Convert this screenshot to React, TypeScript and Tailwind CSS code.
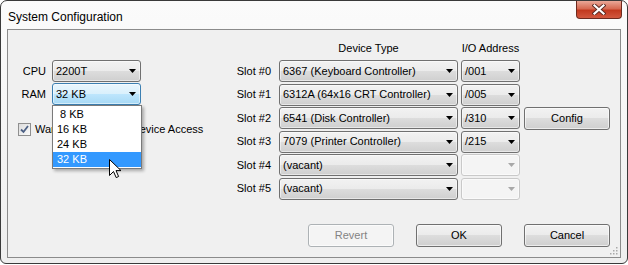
import React from "react"

type Kind = "normal" | "focus" | "disabled"

const Arrow = ({ disabled }: { disabled?: boolean }) => (
  <svg width="7" height="4" viewBox="0 0 7 4" className="shrink-0">
    <path d="M0 0H7L3.5 4Z" fill={disabled ? "#a8a8a8" : "#000"} />
  </svg>
)

const Combo = ({ text, kind = "normal", className = "" }: { text?: string; kind?: Kind; className?: string }) => {
  const skin =
    kind === "focus"
      ? "border-[#3c7fb1] bg-[linear-gradient(#eaf6fd_0%,#d9f0fc_50%,#bee6fd_50%,#a7d9f5_100%)]"
      : kind === "disabled"
        ? "border-[#c9c9c9] bg-[#f4f4f4]"
        : "border-[#707070] bg-[linear-gradient(#f2f2f2_0%,#ebebeb_50%,#dddddd_50%,#cfcfcf_100%)]"
  return (
    <div
      className={`flex items-center justify-between h-[22px] border rounded-[3px] pl-[3px] pr-[4px] shadow-[inset_0_0_0_1px_rgba(255,255,255,0.5)] ${skin} ${className}`}
    >
      <span className="whitespace-nowrap">{text}</span>
      <Arrow disabled={kind === "disabled"} />
    </div>
  )
}

const Button = ({ label, disabled, className = "" }: { label: string; disabled?: boolean; className?: string }) => (
  <div
    className={`flex items-center justify-center w-[86px] h-[23px] border rounded-[3px] shadow-[inset_0_0_0_1px_rgba(255,255,255,0.6)] ${
      disabled
        ? "border-[#adb2b5] bg-[#f4f4f4] text-[#838383]"
        : "border-[#707070] bg-[linear-gradient(#f2f2f2_0%,#ebebeb_50%,#dddddd_50%,#cfcfcf_100%)]"
    } ${className}`}
  >
    {label}
  </div>
)

const slots = [
  { device: "6367 (Keyboard Controller)", io: "/001" },
  { device: "6312A (64x16 CRT Controller)", io: "/005" },
  { device: "6541 (Disk Controller)", io: "/310", config: true },
  { device: "7079 (Printer Controller)", io: "/215" },
  { device: "(vacant)", io: "" },
  { device: "(vacant)", io: "" },
]

const ramSizes = [" 8 KB", "16 KB", "24 KB", "32 KB"]

export default function App() {
  return (
    <div className="w-[628px] h-[265px] bg-white text-[11px] text-black font-['Liberation_Sans',Arial,sans-serif]">
      <div className="w-[628px] h-[264px] flex flex-col border border-[#3a3a3a] rounded-t-[7px] rounded-b-[6px] bg-[linear-gradient(#fbfbfb,#eeeeee)]">
        {/* title bar */}
        <div className="h-[28px] flex justify-between pl-[7px] pr-[5px]">
          <span className="text-[12px] mt-[7px]">System Configuration</span>
          <div className="w-[46px] h-[18px] flex items-center justify-center border border-t-0 border-[#6d2a1f] rounded-b-[4px] bg-[linear-gradient(#eaa898_0%,#d66a52_45%,#c2391f_55%,#d2583f_100%)]">
            <svg width="14" height="11" viewBox="0 0 14 11">
              <path d="M2.5 1.5L11.5 9.5M11.5 1.5L2.5 9.5" stroke="#5a2a22" strokeWidth="4" strokeLinecap="square" />
              <path d="M2.5 1.5L11.5 9.5M11.5 1.5L2.5 9.5" stroke="#ffffff" strokeWidth="2.2" strokeLinecap="square" />
            </svg>
          </div>
        </div>

        {/* client panel */}
        <div className="relative mx-[6px] h-[229px] flex flex-col border border-[#8b8b8b] bg-[#f0f0f0]">
          <div className="flex pt-[11px]">
            {/* left: cpu / ram */}
            <div className="w-[217px] mt-[19px]">
              <div className="grid grid-cols-[38px_89px] gap-x-[6px] gap-y-[1px] items-center">
                <span className="text-right">CPU</span>
                <Combo text="2200T" />
                <span className="text-right">RAM</span>
                <div className="relative">
                  <Combo text="32 KB" kind="focus" />
                  <div className="absolute left-0 top-[22px] z-10 w-[90px] pt-[1px] pb-[1px] border border-[#7a7a7a] bg-white shadow-[2px_2px_3px_rgba(0,0,0,0.3)]">
                    {ramSizes.map((s) => (
                      <div
                        key={s}
                        className={`h-[15px] leading-[15px] pl-[4px] whitespace-pre ${
                          s === "32 KB" ? "bg-[#3399ff] text-white" : ""
                        }`}
                      >
                        {s}
                      </div>
                    ))}
                  </div>
                  <svg width="13" height="20" viewBox="0 0 13 20" className="absolute left-[57px] top-[76px] z-20">
                    <path
                      d="M0.5 0.5V16.5L4.5 12.5L7.2 18.6L9.6 17.5L7 11.6H12Z"
                      fill="#fff"
                      stroke="#000"
                      strokeWidth="1"
                      strokeLinejoin="round"
                    />
                  </svg>
                </div>
              </div>
              <div className="flex items-center gap-[4px] ml-[10px] mt-[16px]">
                <div className="w-[13px] h-[13px] border border-[#8f8f8f] bg-[linear-gradient(135deg,#dcdcdc,#fbfbfb)] flex items-center justify-center">
                  <svg width="9" height="9" viewBox="0 0 9 9">
                    <path d="M1 4.5L3.5 7L8 1" fill="none" stroke="#4d6185" strokeWidth="1.8" />
                  </svg>
                </div>
                <span className="whitespace-nowrap">Warn on Invalid I/O Device Access</span>
              </div>
            </div>

            {/* right: slots */}
            <div className="flex flex-col">
              <div className="flex h-[14px] leading-[14px]">
                <span className="w-[179px] ml-[54px] text-center">Device Type</span>
                <span className="w-[59px] ml-[3px] text-center">I/O Address</span>
              </div>
              <div className="flex flex-col gap-[1.5px] mt-[5px]">
                {slots.map((s, i) => (
                  <div key={i} className="flex items-center h-[22px]">
                    <span className="w-[46px] text-right whitespace-nowrap">Slot #{i}</span>
                    <Combo text={s.device} className="w-[179px] ml-[8px]" />
                    <Combo text={s.io} kind={s.io ? "normal" : "disabled"} className="w-[59px] ml-[3px]" />
                    {s.config && <Button label="Config" className="ml-[4px] w-[84px]" />}
                  </div>
                ))}
              </div>
            </div>
          </div>

          {/* bottom buttons */}
          <div className="mt-auto flex justify-end gap-[22px] pr-[10px] pb-[10px]">
            <Button label="Revert" disabled />
            <Button label="OK" />
            <Button label="Cancel" />
          </div>

          {/* size grip */}
          <svg width="8" height="8" viewBox="0 0 8 8" className="absolute right-[2px] bottom-[2px]">
            <rect x="6" y="0" width="1.5" height="1.5" fill="#a9a9a9" />
            <rect x="3" y="3" width="1.5" height="1.5" fill="#a9a9a9" />
            <rect x="6" y="3" width="1.5" height="1.5" fill="#a9a9a9" />
            <rect x="0" y="6" width="1.5" height="1.5" fill="#a9a9a9" />
            <rect x="3" y="6" width="1.5" height="1.5" fill="#a9a9a9" />
            <rect x="6" y="6" width="1.5" height="1.5" fill="#a9a9a9" />
          </svg>
        </div>
      </div>
    </div>
  )
}
